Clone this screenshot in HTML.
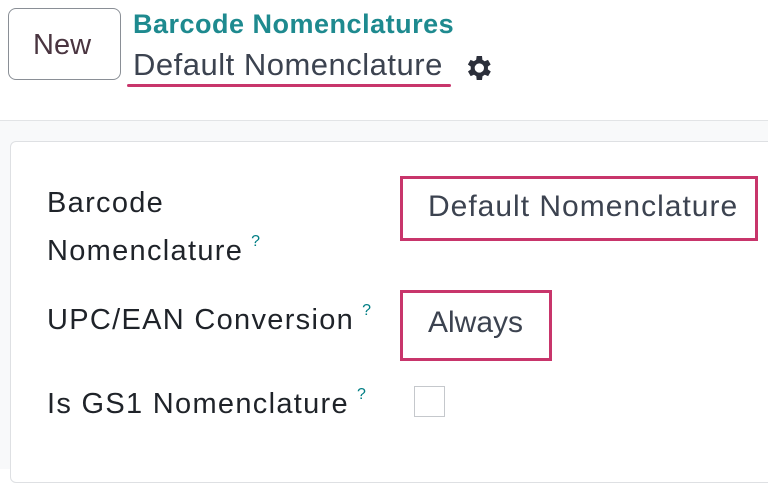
<!DOCTYPE html>
<html><head><style>
body{margin:0;width:768px;height:468px;overflow:hidden;background:#fff;font-family:"Liberation Sans",sans-serif;position:relative}
.a{position:absolute;white-space:nowrap}
.lbl{font-size:29px;color:#1f2329;letter-spacing:1.3px}
.q{font-size:16px;color:#017e84;vertical-align:top;position:relative;top:-2px;margin-left:8px;letter-spacing:0}
</style></head><body>
<div class="a" style="left:8px;top:8px;width:113px;height:72px;border:1px solid #8a8f96;border-radius:8px;box-sizing:border-box"></div>
<div class="a" style="left:33px;top:29px;font-size:29px;color:#4a3540">New</div>
<div class="a" style="left:133px;top:9px;font-size:27px;font-weight:bold;color:#1e8a8f;letter-spacing:0.5px">Barcode Nomenclatures</div>
<div class="a" style="left:133px;top:47px;font-size:31px;color:#3c4350;letter-spacing:0.5px">Default Nomenclature</div>
<div class="a" style="left:127px;top:84px;width:324px;height:3px;background:#c8356b;border-radius:2px"></div>
<svg class="a" style="left:462px;top:52px" width="32" height="32" viewBox="0 0 24 24"><path fill="#2b2f3a" d="M19.4 13a7.5 7.5 0 0 0 0-2l2.1-1.6-2-3.5-2.5 1a7.6 7.6 0 0 0-1.7-1L15 3h-4l-.4 2.9a7.6 7.6 0 0 0-1.7 1l-2.5-1-2 3.5L6.6 11a7.5 7.5 0 0 0 0 2l-2.1 1.6 2 3.5 2.5-1a7.6 7.6 0 0 0 1.7 1L11 21h4l.4-2.9a7.6 7.6 0 0 0 1.7-1l2.5 1 2-3.5zM13 15.5a3.5 3.5 0 1 1 0-7 3.5 3.5 0 0 1 0 7z"/></svg>
<div class="a" style="left:0;top:120px;width:768px;height:348px;background:#f8f9fa;border-top:1px solid #e2e4e6"></div>
<div class="a" style="left:10px;top:141px;width:770px;height:340px;background:#fff;border:1px solid #dee0e3;border-radius:6px"></div>
<div class="a lbl" style="left:47px;top:187px">Barcode</div>
<div class="a lbl" style="left:47px;top:235px">Nomenclature<span class="q">?</span></div>
<div class="a lbl" style="left:47px;top:304px">UPC/EAN Conversion<span class="q">?</span></div>
<div class="a lbl" style="left:47px;top:388px">Is GS1 Nomenclature<span class="q">?</span></div>
<div class="a" style="left:400px;top:176px;width:358px;height:65px;border:3px solid #c8356b;box-sizing:border-box"></div>
<div class="a" style="left:428px;top:190px;font-size:30px;color:#3c4350;letter-spacing:1px">Default Nomenclature</div>
<div class="a" style="left:400px;top:290px;width:152px;height:71px;border:3px solid #c8356b;box-sizing:border-box"></div>
<div class="a" style="left:428px;top:306px;font-size:30px;color:#3c4350">Always</div>
<div class="a" style="left:414px;top:386px;width:31px;height:31px;border:1px solid #c5c8cc;box-sizing:border-box"></div>
</body></html>
